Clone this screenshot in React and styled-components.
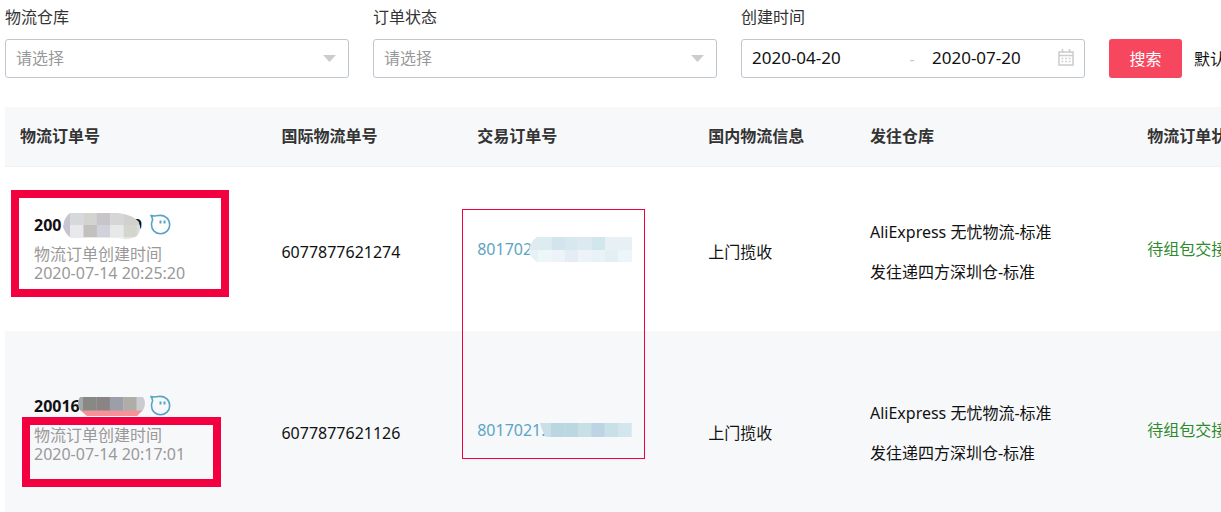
import React from 'react'
import styled, { createGlobalStyle } from 'styled-components'

const GlobalStyle = createGlobalStyle`
  * {
    box-sizing: border-box;
  }
  body {
    margin: 0;
    overflow: hidden;
    color: #111;
    background: #fff;
    font: 16px/20px 'Noto Sans', 'Noto Sans CJK SC', sans-serif;
  }
  input, select, button {
    font-family: inherit;
  }
`

const Page = styled.main`
  position: relative;
  padding: 7px 0 0 5px;
`

const Filters = styled.form`
  display: grid;
  grid-template-columns: repeat(3, 1fr) 112px;
  align-items: end;
  gap: 24px;
`

const Field = styled.div`
  display: flex;
  flex-direction: column;
  gap: 12px;
  min-width: 0;
`

const Label = styled.label`
  color: #333;
`

const Box = styled.div`
  position: relative;
  display: flex;
  align-items: center;
  height: 39px;
  border: 1px solid #c0c6cd;
  border-radius: 3px;
  background: #fff;
`

const Select = styled.select`
  flex: 1;
  height: 100%;
  padding: 0 10px 2px;
  border: 0;
  color: #999;
  font-size: 16px;
  background: none;
  appearance: none;
`

const Arrow = styled.svg`
  position: absolute;
  right: 12px;
  width: 13px;
  height: 7px;
  pointer-events: none;
`

const DateInput = styled.input`
  flex: none;
  width: ${p => p.$width}px;
  height: 100%;
  padding: 0 0 2px 10px;
  border: 0;
  color: #111;
  font-size: 17px;
  background: none;
`

const Dash = styled.span`
  flex: none;
  width: 20px;
  text-align: center;
  color: #ccc;
`

const CalendarIcon = styled.svg`
  flex: none;
  width: 16px;
  height: 17px;
  margin: 0 10px 2px auto;
`

const Actions = styled.div`
  display: flex;
  align-items: center;
  gap: 12px;
  overflow: hidden;
  white-space: nowrap;
`

const SearchButton = styled.button`
  flex: none;
  width: 73px;
  height: 39px;
  padding: 0 0 2px;
  border: 0;
  border-radius: 3px;
  color: #fff;
  font-size: 16px;
  background: #f7475f;
`

const Table = styled.table`
  width: 100%;
  margin-top: 29px;
  table-layout: fixed;
  border-collapse: collapse;
`

const Th = styled.th`
  width: ${p => p.$width};
  height: 59px;
  padding: 0 0 0 15px;
  overflow: hidden;
  border-bottom: 1px solid #f0f2f4;
  color: #333;
  font-weight: bold;
  text-align: left;
  white-space: nowrap;
  background: #f7f8fa;
`

const Row = styled.tr`
  height: ${p => (p.$tall ? 181 : 165)}px;
  background: ${p => (p.$tall ? '#f7f8fa' : '#fff')};
  td {
    padding-top: ${p => (p.$tall ? 16 : 0)}px;
  }
`

const Td = styled.td`
  padding: 0 0 0 15px;
  overflow: hidden;
  white-space: nowrap;
`

const Order = styled.div`
  position: relative;
  padding-left: 14px;
`

const OrderHead = styled.div`
  display: flex;
  align-items: center;
  gap: 8px;
  margin-bottom: 10px;
`

const OrderId = styled.strong`
  display: flex;
  justify-content: space-between;
  width: 108px;
`

const Created = styled.div`
  color: #999;
  line-height: 19px;
`

const Text = styled.div`
  margin-top: 7px;
`

const Route = styled.div`
  margin-top: 6px;
  line-height: 40px;
`

const TradeLink = styled.a`
  position: relative;
  color: #5ba5c4;
  text-decoration: none;
`

const Status = styled.span`
  color: #2f8a2f;
`

// mosaic laid over part of a number
const Mosaic = styled.svg`
  position: absolute;
  left: ${p => p.$left}px;
  top: ${p => p.$top}px;
`

const Mark = styled.div`
  position: absolute;
  left: ${p => p.$left}px;
  top: ${p => p.$top}px;
  width: ${p => p.$width}px;
  height: ${p => p.$height}px;
  border: ${p => p.$line}px solid #f2003f;
  pointer-events: none;
`

const columns = [
  ['物流订单号', '21.5%'],
  ['国际物流单号', '16.1%'],
  ['交易订单号', '19%'],
  ['国内物流信息', '13.3%'],
  ['发往仓库', '22.8%'],
  ['物流订单状态', 'auto'],
]

const orders = [
  {
    id: '200',
    tail: '9',
    created: '2020-07-14 20:25:20',
    tracking: '6077877621274',
    trade: '801702',
  },
  {
    id: '20016',
    created: '2020-07-14 20:17:01',
    tracking: '6077877621126',
    trade: '8017021.',
    tall: true,
  },
]

const Chat = () => (
  <svg width="21" height="21" viewBox="0 0 21 21" fill="none" stroke="#55a4c6" strokeWidth="1.6">
    <path d="M1 1.500C3.500 2.300 6 2 8.500 1.500 15 .7 19.700 5 19.700 10.700c0 5-4 9-9.200 9s-9-4-9-9c0-2 .6-3.200 1-4.700C2.800 4.300 2 3 1 1.500z" strokeLinejoin="round" />
    <path d="M10.500 6.500v3M14.500 6.500v3" strokeWidth="2" />
  </svg>
)

const Tiles = ({ rows, size = 13.4, height = 12, offset = 0 }) =>
  rows.map((row, y) =>
    row.map((fill, x) => (
      <rect
        key={`${x}-${y}`}
        x={x ? offset + (x - 1) * size : 0}
        y={y * height}
        width={(x ? size : offset) + 0.3}
        height={height + 0.3}
        fill={fill}
      />
    ))
  )

const IdMosaic = ({ tall }) =>
  tall ? (
    <Mosaic $left={58} $top={2} width="70" height="20">
      <clipPath id="id-b">
        <path d="M2 0H65Q69 6 65 13L59 19H9L2 13Q-2 6 2 0z" />
      </clipPath>
      <g clipPath="url(#id-b)">
        <Tiles offset={5} height={14} rows={[['#a3a9aa', '#888885', '#8a8485', '#9a9fa9', '#b0ada8', '#c9cdd1']]} />
        <path d="M0 13.500h70V20H0z" fill="#f49299" />
      </g>
    </Mosaic>
  ) : (
    <Mosaic $left={43} $top={-1} width="79" height="27">
      <clipPath id="id-a">
        <path d="M7 0H55Q70 2 75 8Q80 17 74 23Q66 28 54 25H8Q3 22 0 14Q1 4 7 0z" />
      </clipPath>
      <g clipPath="url(#id-a)">
        <Tiles
          offset={7}
          rows={[
            ['#c9c5d0', '#d6d9dc', '#d3d4d0', '#c7c5ca', '#d5d6d5', '#d0d1cd', '#d0d1cd'],
            ['#c9c5d0', '#e7e9ec', '#c3c1bd', '#d1d1da', '#e7e8e8', '#d5d5cf', '#dddddb'],
            ['#e7e9ec', '#e7e9ec', '#e7e9ec', '#e7e9ec', '#eeeeee', '#e5e5e2', '#e5e5e2'],
          ]}
        />
      </g>
    </Mosaic>
  )

const TradeMosaic = ({ tall }) =>
  tall ? (
    <Mosaic $left={63} $top={4} width="92" height="14">
      <clipPath id="trade-b">
        <path d="M0 0H92V14H6Q2 8 0 0z" />
      </clipPath>
      <g clipPath="url(#trade-b)">
        <Tiles offset={11} height={14} rows={[['#c9e0e8', '#bad7e1', '#bad8e2', '#c9dfe6', '#bcd4e3', '#c8e0e8', '#d4e6ed']]} />
      </g>
    </Mosaic>
  ) : (
    <Mosaic $left={52} $top={-1} width="103" height="26">
      <clipPath id="trade-a">
        <path d="M8 0H103V25H8Q3 22 0 16Q0 5 8 0z" />
      </clipPath>
      <g clipPath="url(#trade-a)">
        <Tiles
          offset={9}
          height={13}
          rows={[
            ['#dfebf1', '#dcecf1', '#d2e5ec', '#d7e8ef', '#dde9f1', '#d2e6ed', '#e7f1f5', '#e7f1f5'],
            ['#e8f1f5', '#edf6f9', '#eef3f8', '#e4edf5', '#eef3f8', '#e9f2f7', '#e2eff3', '#ecf5f8'],
          ]}
        />
      </g>
    </Mosaic>
  )

const SelectField = ({ id, label }) => (
  <Field>
    <Label htmlFor={id}>{label}</Label>
    <Box>
      <Select id={id}>
        <option>请选择</option>
      </Select>
      <Arrow viewBox="0 0 13 7">
        <path d="M0 0h13L6.500 7z" fill="#ccc" />
      </Arrow>
    </Box>
  </Field>
)

const App = () => (
  <Page>
    <GlobalStyle />
    <Filters onSubmit={e => e.preventDefault()}>
      <SelectField id="warehouse" label="物流仓库" />
      <SelectField id="status" label="订单状态" />
      <Field>
        <Label htmlFor="from">创建时间</Label>
        <Box>
          <DateInput id="from" $width={160} defaultValue="2020-04-20" />
          <Dash>-</Dash>
          <DateInput aria-label="结束时间" $width={120} defaultValue="2020-07-20" />
          <CalendarIcon viewBox="0 0 16 17" fill="none" stroke="#ccc">
            <path d="M1 3h14v13H1z" strokeWidth="1.500" />
            <path d="M1 6.500h14M4.500 0v4M11.500 0v4" strokeWidth="1.500" />
            <path d="M3.500 9.500h9M3.500 12.500h9" strokeWidth="1.500" strokeDasharray="1.800 1.800" />
          </CalendarIcon>
        </Box>
      </Field>
      <Actions>
        <SearchButton type="submit">搜索</SearchButton>
        <span>默认</span>
      </Actions>
    </Filters>
    <Table>
      <thead>
        <tr>
          {columns.map(([name, width]) => (
            <Th key={name} $width={width}>{name}</Th>
          ))}
        </tr>
      </thead>
      <tbody>
        {orders.map(o => (
          <Row key={o.tracking} $tall={o.tall}>
            <Td>
              <Order>
                <OrderHead>
                  <OrderId>
                    <span>{o.id}</span>
                    {o.tail && <span>{o.tail}</span>}
                  </OrderId>
                  <Chat />
                </OrderHead>
                <Created>物流订单创建时间</Created>
                <Created>{o.created}</Created>
                <IdMosaic tall={o.tall} />
              </Order>
            </Td>
            <Td><Text>{o.tracking}</Text></Td>
            <Td>
              <TradeLink href="#trade">
                {o.trade}
                <TradeMosaic tall={o.tall} />
              </TradeLink>
            </Td>
            <Td><Text>上门揽收</Text></Td>
            <Td>
              <Route>
                AliExpress 无忧物流-标准
                <br />
                发往递四方深圳仓-标准
              </Route>
            </Td>
            <Td><Status>待组包交接</Status></Td>
          </Row>
        ))}
      </tbody>
    </Table>
    <Mark $left={11} $top={190} $width={218} $height={107} $line={8} />
    <Mark $left={22} $top={417} $width={199} $height={70} $line={8} />
    <Mark $left={462} $top={209} $width={183} $height={250} $line={1} />
  </Page>
)

export default App
